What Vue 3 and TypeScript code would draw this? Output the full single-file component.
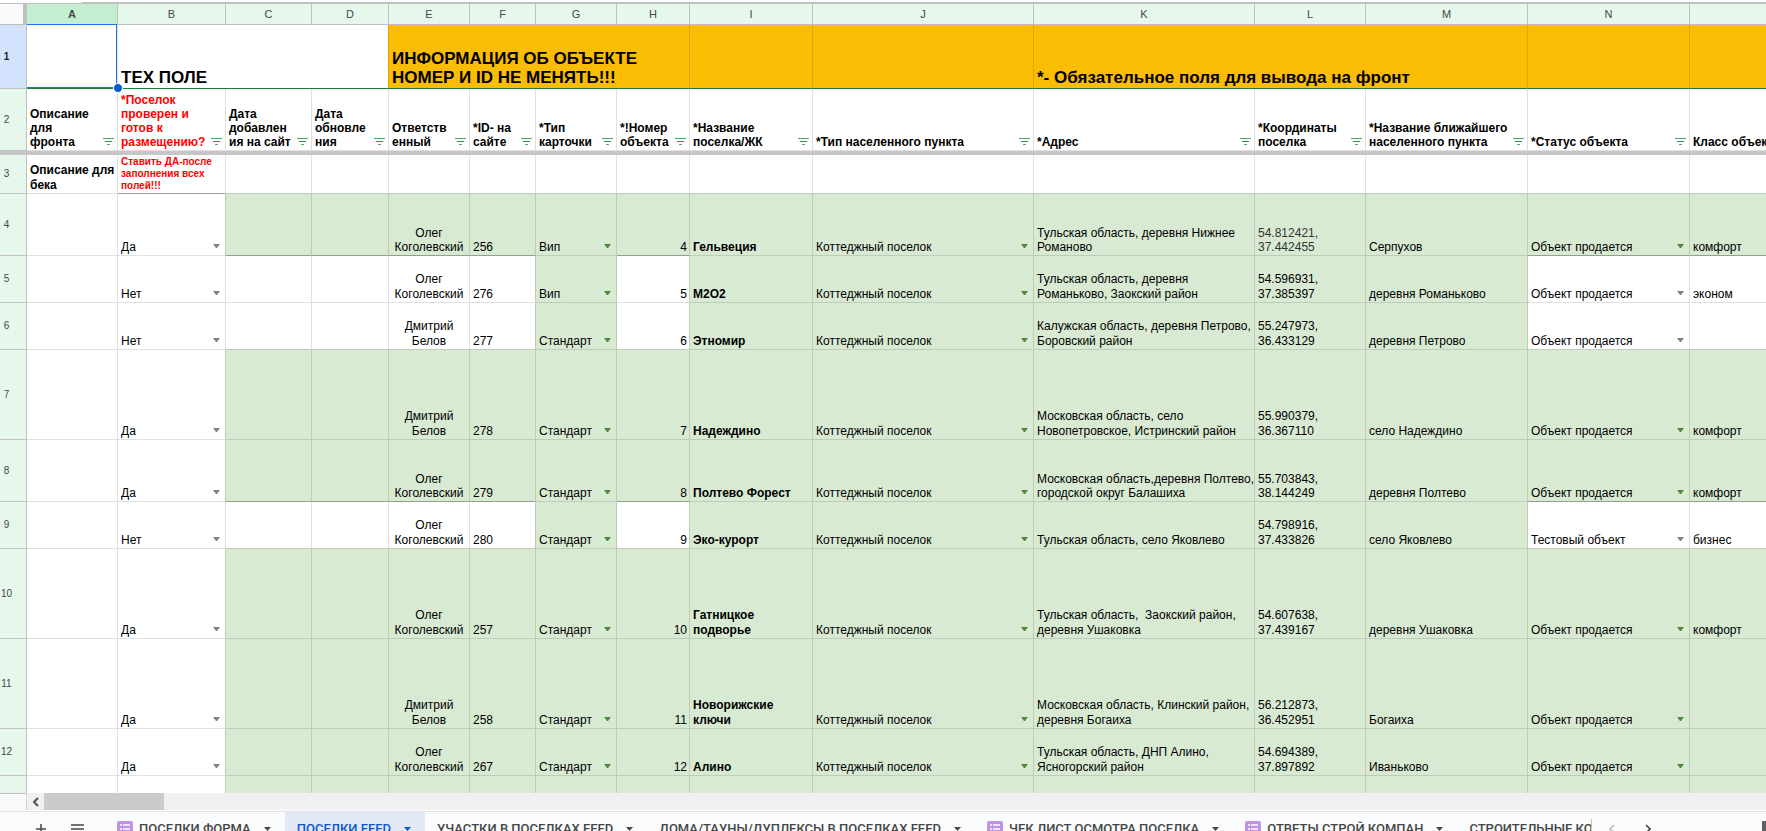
<script setup lang="ts">
interface Column {
  letter: string
  width?: number
}
interface Cell {
  text: string
  col: number
  green: boolean
  classes: string[]
  options: string[]
}
interface RowSource {
  n: number
  height: number
  partial?: boolean
  tight?: boolean
  values: string[]
}

const columns: Column[] = [
  { letter: 'A', width: 91 },
  { letter: 'B', width: 108 },
  { letter: 'C', width: 86 },
  { letter: 'D', width: 77 },
  { letter: 'E', width: 81 },
  { letter: 'F', width: 66 },
  { letter: 'G', width: 81 },
  { letter: 'H', width: 73 },
  { letter: 'I', width: 123 },
  { letter: 'J', width: 221 },
  { letter: 'K', width: 221 },
  { letter: 'L', width: 111 },
  { letter: 'M', width: 162 },
  { letter: 'N', width: 162 },
  { letter: '' },
]

const titles = [
  { text: 'ТЕХ ПОЛЕ', span: 3, gold: false },
  { text: 'ИНФОРМАЦИЯ ОБ ОБЪЕКТЕ\nНОМЕР И ID НЕ МЕНЯТЬ!!!', span: 4, gold: true },
  { text: '', span: 1, gold: true },
  { text: '', span: 1, gold: true },
  { text: '*- Обязательное поля для вывода на фронт', span: 3, gold: true },
  { text: '', span: 1, gold: true },
  { text: '', span: 1, gold: true },
]

const fields = [
  'Описание\nдля\nфронта',
  '*Поселок\nпроверен и\nготов к\nразмещению?',
  'Дата\nдобавлен\nия на сайт',
  'Дата\nобновле\nния',
  'Ответств\nенный',
  '*ID- на\nсайте',
  '*Тип\nкарточки',
  '*!Номер\nобъекта',
  '*Название\nпоселка/ЖК',
  '*Тип населенного пункта',
  '*Адрес',
  '*Координаты\nпоселка',
  '*Название ближайшего\nнаселенного пункта',
  '*Статус объекта',
  'Класс объекта',
]

const oleg = 'Олег\nКоголевский'
const dmitry = 'Дмитрий\nБелов'
const village = 'Коттеджный поселок'
const selling = 'Объект продается'

const source: RowSource[] = [
  { n: 4, height: 62, tight: true, values: ['', 'Да', '', '', oleg, '256', 'Вип', '4', 'Гельвеция', village, 'Тульская область, деревня Нижнее\nРоманово', '54.812421,\n37.442455', 'Серпухов', selling, 'комфорт'] },
  { n: 5, height: 47, partial: true, values: ['', 'Нет', '', '', oleg, '276', 'Вип', '5', 'М2О2', village, 'Тульская область, деревня\nРоманьково, Заокский район', '54.596931,\n37.385397', 'деревня Романьково', selling, 'эконом'] },
  { n: 6, height: 47, partial: true, values: ['', 'Нет', '', '', dmitry, '277', 'Стандарт', '6', 'Этномир', village, 'Калужская область, деревня Петрово,\nБоровский район', '55.247973,\n36.433129', 'деревня Петрово', selling, ''] },
  { n: 7, height: 90, values: ['', 'Да', '', '', dmitry, '278', 'Стандарт', '7', 'Надеждино', village, 'Московская область, село\nНовопетровское, Истринский район', '55.990379,\n36.367110', 'село Надеждино', selling, 'комфорт'] },
  { n: 8, height: 62, tight: true, values: ['', 'Да', '', '', oleg, '279', 'Стандарт', '8', 'Полтево Форест', village, 'Московская область,деревня Полтево,\nгородской округ Балашиха', '55.703843,\n38.144249', 'деревня Полтево', selling, 'комфорт'] },
  { n: 9, height: 47, partial: true, values: ['', 'Нет', '', '', oleg, '280', 'Стандарт', '9', 'Эко-курорт', village, 'Тульская область, село Яковлево', '54.798916,\n37.433826', 'село Яковлево', 'Тестовый объект', 'бизнес'] },
  { n: 10, height: 90, values: ['', 'Да', '', '', oleg, '257', 'Стандарт', '10', 'Гатницкое\nподворье', village, 'Тульская область,  Заокский район,\nдеревня Ушаковка', '54.607638,\n37.439167', 'деревня Ушаковка', selling, 'комфорт'] },
  { n: 11, height: 90, values: ['', 'Да', '', '', dmitry, '258', 'Стандарт', '11', 'Новорижские\nключи', village, 'Московская область, Клинский район,\nдеревня Богаиха', '56.212873,\n36.452951', 'Богаиха', selling, ''] },
  { n: 12, height: 47, values: ['', 'Да', '', '', oleg, '267', 'Стандарт', '12', 'Алино', village, 'Тульская область, ДНП Алино,\nЯсногорский район', '54.694389,\n37.897892', 'Иваньково', selling, ''] },
  { n: 13, height: 47, values: Array(15).fill('') },
]

const choices: Record<number, string[]> = {
  1: ['Да', 'Нет'],
  6: ['Вип', 'Стандарт'],
  9: [village],
  13: [selling, 'Тестовый объект'],
}
const whiteWhenPartial = [2, 3, 4, 5, 7, 13, 14]

function isGreen(row: RowSource | undefined, col: number): boolean {
  if (!row || col < 2 || col > 14) return false
  return !(row.partial && whiteWhenPartial.includes(col))
}

const rows = source.map((row, r) => ({
  ...row,
  cells: row.values.map((text, col): Cell => {
    const green = isGreen(row, col)
    const next = source[r + 1] ?? row
    const below = isGreen(next, col)
    const classes: string[] = []
    if (green) classes.push('green')
    if (green || isGreen(row, col + 1)) classes.push('tint-right')
    if (green && !below) classes.push('dark-bottom')
    else if (green || below) classes.push('tint-bottom')
    if (col === 4) classes.push('center')
    if (col === 7) classes.push('right')
    if (col === 8) classes.push('bold')
    if (col === 11 && row.n === 4) classes.push('soft')
    return { text, col, green, classes, options: text ? (choices[col] ?? []) : [] }
  }),
}))

const tabs = [
  { name: 'ПОСЕЛКИ ФОРМА', form: true, active: false },
  { name: 'ПОСЕЛКИ FEED', form: false, active: true },
  { name: 'УЧАСТКИ В ПОСЕЛКАХ FEED', form: false, active: false },
  { name: 'ДОМА/ТАУНЫ/ДУПЛЕКСЫ В ПОСЕЛКАХ FEED', form: false, active: false },
  { name: 'ЧЕК ЛИСТ ОСМОТРА ПОСЕЛКА', form: true, active: false },
  { name: 'ОТВЕТЫ СТРОЙ КОМПАН', form: true, active: false },
  { name: 'СТРОИТЕЛЬНЫЕ КОМПАНИИ', form: false, active: false },
]
</script>

<template>
  <div class="app">
    <main class="sheet">
      <div class="strip"><div class="strip-line"></div></div>
      <table class="grid">
        <colgroup>
          <col class="num-col" />
          <col v-for="(c, i) in columns" :key="i" :style="c.width ? { width: c.width + 'px' } : undefined" />
        </colgroup>
        <thead>
          <tr class="letters">
            <td class="corner"></td>
            <th v-for="(c, i) in columns" :key="i" scope="col" :class="{ current: i === 0 }">{{ c.letter }}</th>
          </tr>
        </thead>
        <tbody>
          <tr class="title-row">
            <th scope="row" class="num current">1</th>
            <td class="selected"><div class="selection"><span class="handle"></span></div></td>
            <td v-for="(t, i) in titles" :key="i" :colspan="t.span" :class="{ gold: t.gold, 'before-gold': i === 0 }">
              <div class="text">{{ t.text }}</div>
            </td>
          </tr>
          <tr class="field-row">
            <th scope="row" class="num">2</th>
            <td v-for="(f, i) in fields" :key="i" :class="{ red: i === 1 }">
              <div class="field">
                <div class="text">{{ f }}</div>
                <button v-if="i < 14" class="filter" type="button" :aria-label="'Фильтр ' + columns[i].letter">
                  <svg width="11" height="7" viewBox="0 0 11 7">
                    <rect width="11" height="1" fill="#4fa56e" />
                    <rect x="2" y="3" width="7" height="1" fill="#2f8f53" />
                    <rect x="4" y="6" width="3" height="1" fill="#4fa56e" />
                  </svg>
                </button>
              </div>
            </td>
          </tr>
          <tr class="freeze"><td colspan="16"></td></tr>
          <tr class="note-row">
            <th scope="row" class="num">3</th>
            <td class="bold"><div class="text">Описание для<br />бека</div></td>
            <td class="note"><div class="text">Ставить ДА-после<br />заполнения всех<br />полей!!!</div></td>
            <td v-for="i in 13" :key="i" class="tint-bottom"></td>
          </tr>
          <tr v-for="row in rows" :key="row.n" :class="{ tight: row.tight }" :style="{ height: row.height + 'px' }">
            <th scope="row" class="num">{{ row.n < 13 ? row.n : '' }}</th>
            <td v-for="cell in row.cells" :key="cell.col" :class="cell.classes">
              <div v-if="cell.options.length" class="choice">
                <select :value="cell.text" :aria-label="columns[cell.col].letter + row.n">
                  <option v-for="o in cell.options" :key="o">{{ o }}</option>
                </select>
                <svg class="caret" width="7" height="4" viewBox="0 0 7 4"><path d="M0 0h7L4 4H3z" fill="currentColor" /></svg>
              </div>
              <div v-else class="text">{{ cell.text }}</div>
            </td>
          </tr>
        </tbody>
      </table>
    </main>

    <div class="scroll">
      <div class="scroll-corner"></div>
      <button class="scroll-button" type="button" aria-label="Прокрутить влево">
        <svg width="7" height="10" viewBox="0 0 7 10"><path d="M6 1L2 5l4 4" fill="none" stroke="#505050" stroke-width="2" /></svg>
      </button>
      <div class="thumb"></div>
    </div>

    <footer class="footer">
      <button class="tool" type="button" aria-label="Добавить лист">
        <svg width="10" height="10" viewBox="0 0 10 10"><path d="M5 0v10M0 5h10" stroke="#444746" stroke-width="1.5" /></svg>
      </button>
      <button class="tool list" type="button" aria-label="Все листы">
        <svg width="13" height="10" viewBox="0 0 13 10"><path d="M0 1h13M0 5h13M0 9h13" stroke="#444746" stroke-width="1.5" /></svg>
      </button>
      <nav class="tabs">
        <button v-for="t in tabs" :key="t.name" type="button" class="tab" :class="{ active: t.active }">
          <svg v-if="t.form" class="form-icon" width="16" height="16" viewBox="0 0 16 16">
            <rect width="16" height="16" rx="2" fill="#bf94e6" />
            <path d="M3 4h2M6 4h7M3 8h2M6 8h7M3 12h2M6 12h7" stroke="#fff" stroke-width="1.6" />
          </svg>
          <span>{{ t.name }}</span>
          <svg class="tab-caret" width="7" height="4" viewBox="0 0 7 4"><path d="M0 0h7L3.5 4z" fill="currentColor" /></svg>
        </button>
      </nav>
      <div class="pager">
        <button type="button" class="page" aria-label="Назад">
          <svg width="6" height="10" viewBox="0 0 6 10"><path d="M5 1L1 5l4 4" fill="none" stroke="#b8babc" stroke-width="1.6" /></svg>
        </button>
        <button type="button" class="page" aria-label="Вперёд">
          <svg width="6" height="10" viewBox="0 0 6 10"><path d="M1 1l4 4-4 4" fill="none" stroke="#444746" stroke-width="1.6" /></svg>
        </button>
      </div>
      <button class="explore" type="button" aria-label="Анализ данных">
        <svg width="16" height="16" viewBox="0 0 16 16"><rect width="16" height="16" rx="1" fill="#5f6063" /><path d="M4 8h8M8 4v8" stroke="#fff" stroke-width="1.5" /></svg>
      </button>
    </footer>
  </div>
</template>

<style>
body {
  margin: 0;
}
</style>

<style scoped>
.app {
  display: flex;
  flex-direction: column;
  height: 100vh;
  overflow: hidden;
  background: #fff;
  color: #000;
  font-family: 'Liberation Sans', Arial, sans-serif;
  font-size: 12px;
  line-height: 15px;
}
button {
  border: 0;
  padding: 0;
  background: none;
  font: inherit;
  color: inherit;
}
svg {
  display: block;
  flex: none;
}
.sheet {
  flex: 1;
  min-height: 0;
  overflow: hidden;
}
.strip {
  box-sizing: border-box;
  height: 4px;
  padding-left: 82px;
  border-bottom: 1px solid #c0c0c0;
}
.strip-line {
  height: 2px;
  border-bottom: 1px solid #c0c0c0;
}
.grid {
  width: 100%;
  min-width: 1740px;
  table-layout: fixed;
  border-collapse: separate;
  border-spacing: 0;
}
.num-col {
  width: 27px;
}
.grid td,
.grid th {
  box-sizing: border-box;
  padding: 0;
  border: 0 solid #e0e0e0;
  border-right-width: 1px;
  border-bottom-width: 1px;
}
.grid td {
  padding: 0 3px;
  vertical-align: bottom;
}
.grid tr > :last-child {
  border-right-width: 0;
}
.letters {
  height: 21px;
}
.grid .letters th {
  padding-bottom: 1px;
  border-color: #c0c0c0;
  background: #e6f8ec;
  color: #444746;
  font-size: 11px;
  font-weight: 400;
  line-height: 16px;
  vertical-align: middle;
}
.grid .letters .current {
  background: #c4eed0;
  font-weight: 700;
}
.grid .corner {
  border-color: #c0c0c0;
  border-right-width: 4px;
  background: #f8f9fa;
}
.grid .num {
  padding-right: 13px;
  border-color: #c0c0c0;
  background: #e6f8ec;
  color: #444746;
  font-size: 10px;
  font-weight: 400;
  line-height: 12px;
  text-align: center;
}
.grid .num.current {
  background: #d3e3fd;
  color: #1f1f1f;
  font-weight: 700;
}
.text {
  white-space: pre;
}
.title-row {
  height: 64px;
}
.grid .title-row td {
  padding-bottom: 1px;
  border-bottom-color: #188038;
  font-size: 17px;
  font-weight: 700;
  line-height: 19px;
}
.grid .title-row .before-gold {
  border-right-color: #dba60b;
}
.grid .title-row .gold {
  border-right-color: #dba60b;
  background: #fbbc04;
}
.grid .selected {
  position: relative;
}
.selection {
  position: absolute;
  inset: -1px 0 0;
  border: 1px solid #1a73e8;
  border-left: 0;
}
.handle {
  position: absolute;
  right: -7px;
  bottom: -6px;
  width: 8px;
  height: 8px;
  border: 1px solid #fff;
  border-radius: 50%;
  background: #0b57d0;
  z-index: 1;
}
.field-row {
  height: 62px;
  font-weight: 700;
  line-height: 14px;
}
.grid .field-row td,
.grid .tight td {
  padding-bottom: 1px;
}
.field {
  display: flex;
  align-items: flex-end;
  justify-content: space-between;
}
.filter {
  padding-bottom: 4px;
}
.red,
.note {
  color: #f00;
}
.freeze {
  height: 4px;
}
.grid .freeze td {
  height: 4px;
  padding: 0;
  border: 0;
  background: #c6c6c6;
}
.note-row {
  height: 39px;
}
.bold {
  font-weight: 700;
}
.grid .note {
  padding-bottom: 1px;
  border-bottom-color: #a0a0a0;
  font-size: 10px;
  font-weight: 700;
  line-height: 12px;
}
.tight {
  line-height: 14px;
}
.green {
  background: #d9ead3;
}
.grid .tint-right {
  border-right-color: #bccdb8;
}
.grid .tint-bottom {
  border-bottom-color: #bccdb8;
}
.grid .dark-bottom {
  border-bottom-color: #92a08e;
}
.center {
  text-align: center;
}
.right {
  text-align: right;
}
.grid td.right {
  padding-right: 2px;
}
.soft {
  color: #333;
}
.choice {
  display: flex;
  align-items: center;
  padding-right: 2px;
  color: #808080;
}
.green .choice {
  color: #4c8a3b;
}
.choice select {
  flex: 1;
  min-width: 0;
  margin: 0;
  padding: 0;
  border: 0;
  background: none;
  appearance: none;
  color: #000;
  font: inherit;
}
.caret {
  padding-bottom: 3px;
}
.scroll {
  display: flex;
  flex: 0 0 17px;
  background: #f0f0f0;
  border-bottom: 1px solid #fff;
}
.scroll-corner {
  box-sizing: border-box;
  width: 27px;
  border-top: 1px solid #c0c0c0;
  border-right: 1px solid #d5d5d5;
  background: #f8f9fa;
}
.scroll-button {
  display: grid;
  place-items: center;
  width: 17px;
}
.thumb {
  width: 120px;
  background: #cbcbcb;
}
.footer {
  display: flex;
  flex: 0 0 19px;
  align-items: flex-start;
  overflow: hidden;
  border-top: 1px solid #e1e3e6;
  background: #f9fbfd;
  color: #444746;
  font-family: Roboto, 'Liberation Sans', sans-serif;
  font-size: 13px;
  font-weight: 500;
  line-height: 34px;
}
.tool {
  display: grid;
  place-items: center;
  height: 33px;
  margin-left: 36px;
}
.tool.list {
  margin-left: 25px;
}
.tabs {
  display: flex;
  flex: 1;
  min-width: 0;
  margin-left: 21px;
  overflow: hidden;
}
.tab {
  display: flex;
  flex: none;
  align-items: center;
  height: 34px;
  padding: 0 14px 0 12px;
  white-space: nowrap;
}
.tab.active {
  background: #e1e9f7;
  color: #0b57d0;
}
.form-icon {
  margin-right: 6px;
}
.tab-caret {
  margin-left: 13px;
}
.pager {
  display: flex;
  gap: 30px;
  width: 171px;
  box-sizing: border-box;
  height: 24px;
  margin-top: 7px;
  padding-left: 17px;
  border-left: 1px solid #c0c0c0;
}
.page {
  display: grid;
  place-items: center;
  height: 20px;
}
.explore {
  width: 4px;
  padding-top: 9px;
}
</style>
